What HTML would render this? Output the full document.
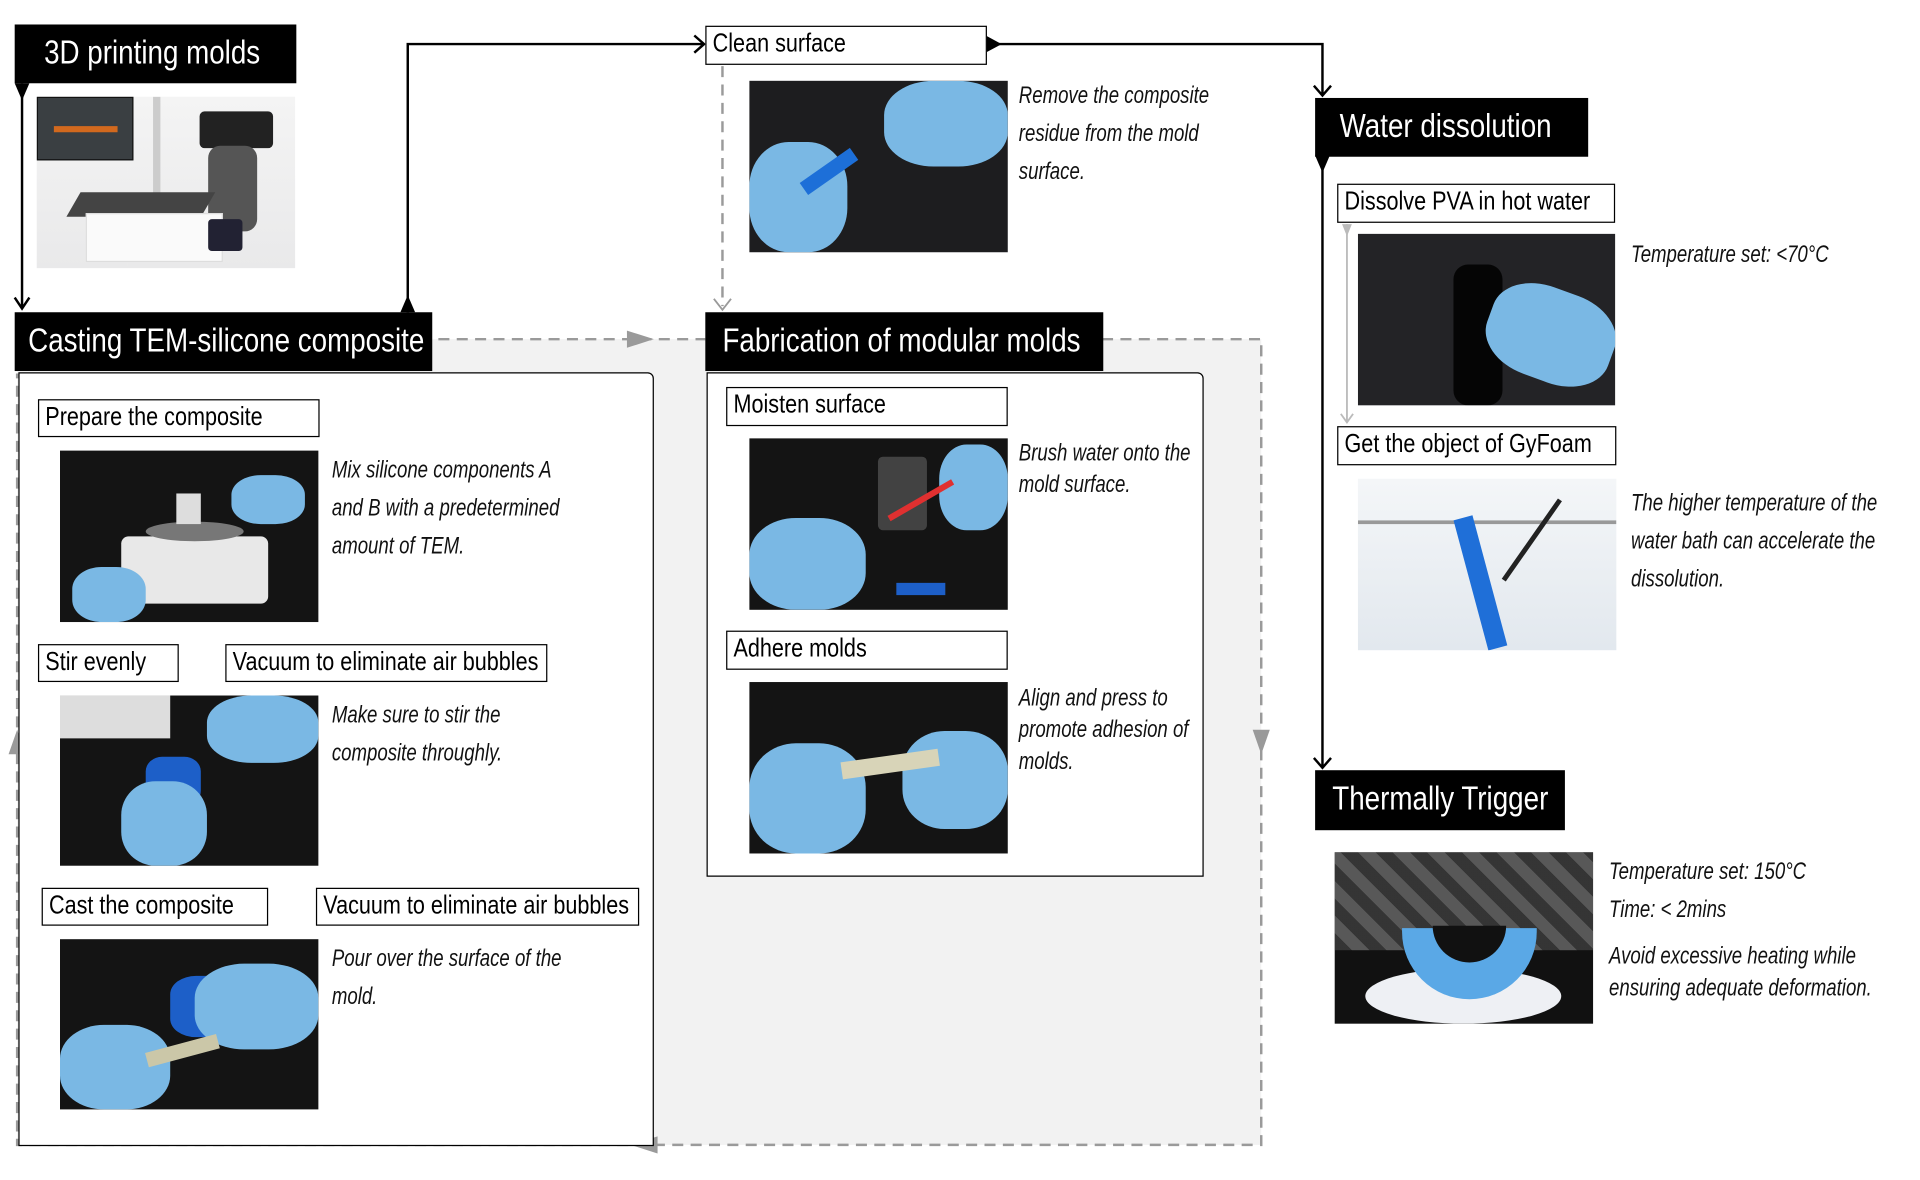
<!DOCTYPE html>
<html><head><meta charset="utf-8"><style>
html,body{margin:0;padding:0;background:#fff;width:1920px;height:1180px;overflow:hidden}
#s{position:absolute;left:0;top:0;width:1568px;height:964px;transform:scale(1.2245);transform-origin:0 0;font-family:"Liberation Sans",sans-serif}
.a{position:absolute}
.hb{position:absolute;background:#000;color:#fff;font-size:27px;line-height:47px;padding-left:11px;box-sizing:border-box;white-space:nowrap}
.sb{position:absolute;background:#fff;border:1.5px solid #000;box-sizing:border-box;font-size:21px;line-height:27px;padding-left:5px;white-space:nowrap}
.n{display:inline-block;transform:scaleX(.84);transform-origin:0 50%}
.t{position:absolute;font-style:italic;font-size:20px;line-height:31px;color:#111;white-space:nowrap;transform:scaleX(.76);transform-origin:0 0}
.ph{position:absolute;overflow:hidden;background:#141414}
.pan{position:absolute;background:#fff;border:1.3px solid #000;box-sizing:border-box;border-top-right-radius:5px}
</style></head><body><div id="s">
<div class="a" style="left:14px;top:277px;width:1016px;height:658px;background:#f2f2f2"></div>
<svg class="a" style="left:0;top:0" width="1568" height="964">
<g fill="none" stroke="#9a9a9a" stroke-width="2" stroke-dasharray="9,6">
<path d="M358 277H576M900 277H1030V935H14V305"/>
<path d="M590 54V250"/>
</g>
<g fill="#9a9a9a">
<polygon points="512,270 534,277 512,284"/>
<polygon points="1023,596 1037,596 1030,616"/>
<polygon points="537,928 537,942 515,935"/>
<polygon points="7,616 21,616 14,596"/>
</g>
<path d="M583 244L590 253L597 244" fill="none" stroke="#9a9a9a" stroke-width="1.5"/>
<g stroke="#bbb" stroke-width="1.5" fill="none">
<path d="M38 358V522M33 516L38 523L43 516M38 558V720M33 714L38 721L43 714"/>
<path d="M603 349V512M598 506L603 513L608 506"/>
<path d="M1100 183V344M1095 338L1100 345L1105 338"/>
</g>
<g fill="#bbb"><polygon points="34,358 42,358 38,368"/><polygon points="599,349 607,349 603,359"/><polygon points="1096,183 1104,183 1100,193"/></g>
<g stroke="#000" stroke-width="2" fill="none">
<path d="M18 68V252M12 243L18 252L24 243"/>
<path d="M333 255V36H574M567 29L575 36L567 43"/>
<path d="M810 36H1080V77M1073 70L1080 78L1087 70"/>
<path d="M1080 127V626M1073 619L1080 627L1087 619"/>
</g>
<g fill="#000">
<polygon points="12,68 24,68 18,82"/>
<polygon points="327,255 339,255 333,241"/>
<polygon points="805,29 805,43 818,36"/>
<polygon points="1074,127 1086,127 1080,141"/>
</g>
<g stroke="#000" stroke-width="1.3" stroke-dasharray="3,2"><path d="M146 541H184M219 740H258"/></g>
</svg>

<div class="hb" style="left:12px;top:20px;width:230px;height:48px;padding-left:24px"><span class="n">3D printing molds</span></div>
<div class="ph" style="left:30px;top:79px;width:211px;height:140px;background:linear-gradient(#f4f4f4,#e9e9ea)">
 <div class="a" style="left:0;top:0;width:77px;height:50px;background:#3a3f42;border:1px solid #111"></div>
 <div class="a" style="left:14px;top:24px;width:52px;height:5px;background:#d2691e"></div>
 <div class="a" style="left:95px;top:0;width:6px;height:100px;background:#ccc"></div>
 <div class="a" style="left:133px;top:12px;width:60px;height:30px;background:#222;border-radius:4px"></div>
 <div class="a" style="left:140px;top:40px;width:40px;height:70px;background:#555;border-radius:10px"></div>
 <div class="a" style="left:30px;top:78px;width:110px;height:20px;background:#444;transform:skewX(-30deg)"></div>
 <div class="a" style="left:40px;top:95px;width:110px;height:38px;background:#fafafa;border:1px solid #ddd"></div>
 <div class="a" style="left:140px;top:100px;width:28px;height:26px;background:#223;border-radius:3px"></div>
</div>

<div class="hb" style="left:12px;top:255px;width:341px;height:48px"><span class="n">Casting TEM-silicone composite</span></div>
<div class="pan" style="left:15px;top:304px;width:519px;height:632px"></div>
<div class="sb" style="left:31px;top:326px;width:230px;height:31px"><span class="n">Prepare the composite</span></div>
<div class="ph" style="left:49px;top:368px;width:211px;height:140px">
 <div class="a" style="left:50px;top:70px;width:120px;height:55px;background:#e8e8e8;border-radius:6px"></div>
 <div class="a" style="left:70px;top:58px;width:80px;height:16px;background:#777;border-radius:50%"></div>
 <div class="a" style="left:95px;top:35px;width:20px;height:25px;background:#ddd"></div>
 <div class="a" style="left:140px;top:20px;width:60px;height:40px;background:#7ab8e4;border-radius:40%"></div>
 <div class="a" style="left:10px;top:95px;width:60px;height:45px;background:#7ab8e4;border-radius:40%"></div>
</div>
<div class="t" style="left:271px;top:369px">Mix silicone components A<br>and B with a predetermined<br>amount of TEM.</div>

<div class="sb" style="left:31px;top:526px;width:115px;height:31px"><span class="n">Stir evenly</span></div>
<div class="sb" style="left:184px;top:526px;width:263px;height:31px"><span class="n">Vacuum to eliminate air bubbles</span></div>
<div class="ph" style="left:49px;top:568px;width:211px;height:139px">
 <div class="a" style="left:0;top:0;width:90px;height:35px;background:#ddd"></div>
 <div class="a" style="left:70px;top:50px;width:45px;height:40px;background:#1d5fc8;border-radius:30%"></div>
 <div class="a" style="left:50px;top:70px;width:70px;height:69px;background:#7ab8e4;border-radius:40%"></div>
 <div class="a" style="left:120px;top:0;width:91px;height:55px;background:#7ab8e4;border-radius:40%"></div>
</div>
<div class="t" style="left:271px;top:569px">Make sure to stir the<br>composite throughly.</div>

<div class="sb" style="left:34px;top:725px;width:185px;height:31px"><span class="n">Cast the composite</span></div>
<div class="sb" style="left:258px;top:725px;width:264px;height:31px"><span class="n">Vacuum to eliminate air bubbles</span></div>
<div class="ph" style="left:49px;top:767px;width:211px;height:139px">
 <div class="a" style="left:90px;top:30px;width:70px;height:50px;background:#1d5fc8;border-radius:30%"></div>
 <div class="a" style="left:110px;top:20px;width:101px;height:70px;background:#7ab8e4;border-radius:40%"></div>
 <div class="a" style="left:0;top:70px;width:90px;height:69px;background:#7ab8e4;border-radius:40%"></div>
 <div class="a" style="left:70px;top:85px;width:60px;height:12px;background:#cbc7a8;transform:rotate(-15deg)"></div>
</div>
<div class="t" style="left:271px;top:768px">Pour over the surface of the<br>mold.</div>

<div class="sb" style="left:576px;top:21px;width:230px;height:32px"><span class="n">Clean surface</span></div>
<div class="ph" style="left:612px;top:66px;width:211px;height:140px;background:#1d1d1f">
 <div class="a" style="left:110px;top:0;width:101px;height:70px;background:#7ab8e4;border-radius:40%"></div>
 <div class="a" style="left:0;top:50px;width:80px;height:90px;background:#7ab8e4;border-radius:40%"></div>
 <div class="a" style="left:40px;top:68px;width:50px;height:12px;background:#1d6fd8;transform:rotate(-35deg)"></div>
</div>
<div class="t" style="left:832px;top:63px">Remove the composite<br>residue from the mold<br>surface.</div>

<div class="hb" style="left:576px;top:255px;width:325px;height:48px;padding-left:14px"><span class="n">Fabrication of modular molds</span></div>
<div class="pan" style="left:577px;top:304px;width:406px;height:412px"></div>
<div class="sb" style="left:593px;top:316px;width:230px;height:32px"><span class="n">Moisten surface</span></div>
<div class="ph" style="left:612px;top:358px;width:211px;height:140px">
 <div class="a" style="left:105px;top:15px;width:40px;height:60px;background:#555;border-radius:4px;opacity:.7"></div>
 <div class="a" style="left:0;top:65px;width:95px;height:75px;background:#7ab8e4;border-radius:40%"></div>
 <div class="a" style="left:155px;top:5px;width:56px;height:70px;background:#7ab8e4;border-radius:40%"></div>
 <div class="a" style="left:110px;top:48px;width:60px;height:5px;background:#e03030;transform:rotate(-30deg)"></div>
 <div class="a" style="left:120px;top:118px;width:40px;height:10px;background:#1d5fc8"></div>
</div>
<div class="t" style="left:832px;top:357px;line-height:26px">Brush water onto the<br>mold surface.</div>
<div class="sb" style="left:593px;top:515px;width:230px;height:32px"><span class="n">Adhere molds</span></div>
<div class="ph" style="left:612px;top:557px;width:211px;height:140px">
 <div class="a" style="left:0;top:50px;width:95px;height:90px;background:#7ab8e4;border-radius:40%"></div>
 <div class="a" style="left:125px;top:40px;width:86px;height:80px;background:#7ab8e4;border-radius:40%"></div>
 <div class="a" style="left:75px;top:60px;width:80px;height:14px;background:#d8d4b8;transform:rotate(-8deg)"></div>
</div>
<div class="t" style="left:832px;top:557px;line-height:26px">Align and press to<br>promote adhesion of<br>molds.</div>

<div class="hb" style="left:1074px;top:80px;width:223px;height:48px;padding-left:20px"><span class="n">Water dissolution</span></div>
<div class="sb" style="left:1092px;top:150px;width:227px;height:32px"><span class="n">Dissolve PVA in hot water</span></div>
<div class="ph" style="left:1109px;top:191px;width:210px;height:140px;background:#232326">
 <div class="a" style="left:78px;top:25px;width:40px;height:115px;background:#050505;border-radius:12px"></div>
 <div class="a" style="left:105px;top:45px;width:105px;height:75px;background:#7ab8e4;border-radius:40%;transform:rotate(20deg)"></div>
</div>
<div class="t" style="left:1332px;top:193px">Temperature set: &lt;70°C</div>
<div class="sb" style="left:1092px;top:348px;width:228px;height:32px"><span class="n">Get the object of GyFoam</span></div>
<div class="ph" style="left:1109px;top:391px;width:211px;height:140px;background:linear-gradient(#f4f6f8,#e2e8ee)">
 <div class="a" style="left:0;top:34px;width:211px;height:3px;background:#999"></div>
 <div class="a" style="left:92px;top:30px;width:16px;height:110px;background:#1f6fd8;transform:rotate(-15deg)"></div>
 <div class="a" style="left:140px;top:10px;width:4px;height:80px;background:#222;transform:rotate(35deg)"></div>
</div>
<div class="t" style="left:1332px;top:396px">The higher temperature of the<br>water bath can accelerate the<br>dissolution.</div>

<div class="hb" style="left:1074px;top:629px;width:204px;height:49px;padding-left:14px"><span class="n">Thermally Trigger</span></div>
<div class="ph" style="left:1090px;top:696px;width:211px;height:140px;background:#111">
 <div class="a" style="left:0;top:0;width:211px;height:80px;background:repeating-linear-gradient(45deg,#444 0 10px,#777 10px 20px);opacity:.7"></div>
 <div class="a" style="left:25px;top:95px;width:160px;height:45px;background:#eef0f4;border-radius:50%"></div>
 <div class="a" style="left:55px;top:62px;width:110px;height:58px;background:#5aa8e6;border-radius:0 0 55px 55px"></div>
 <div class="a" style="left:80px;top:60px;width:60px;height:30px;background:#111;border-radius:0 0 30px 30px"></div>
</div>
<div class="t" style="left:1314px;top:697px">Temperature set: 150°C<br>Time: &lt; 2mins</div>
<div class="t" style="left:1314px;top:768px;line-height:26px">Avoid excessive heating while<br>ensuring adequate deformation.</div>
</div></body></html>
